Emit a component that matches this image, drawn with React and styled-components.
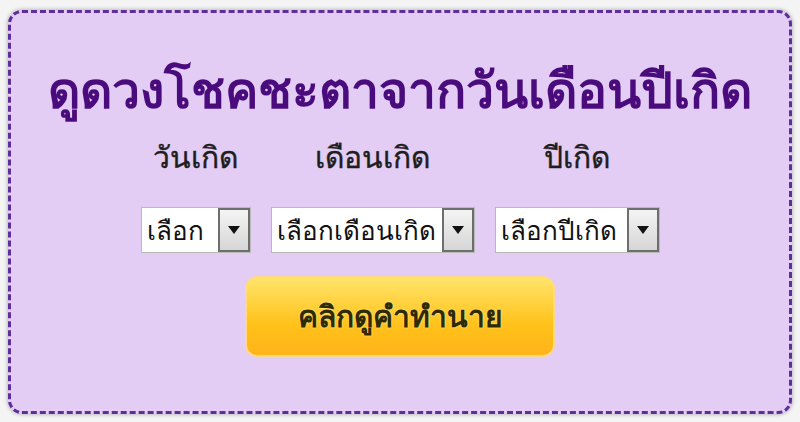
import styled, { createGlobalStyle } from "styled-components";

const GlobalStyle = createGlobalStyle`
  html, body {
    margin: 0;
    padding: 0;
    background: #f4f4f4;
  }
  body {
    font-family: Tahoma, "Noto Sans", "DejaVu Sans", sans-serif;
  }
`;

const fields = [
  { label: "วันเกิด", value: "เลือก", width: 110 },
  { label: "เดือนเกิด", value: "เลือกเดือนเกิด", width: 204 },
  { label: "ปีเกิด", value: "เลือกปีเกิด", width: 165 },
];

const App = () => {
  return (
    <>
      <GlobalStyle />
      <Page>
        <Panel>
          <Title>ดูดวงโชคชะตาจากวันเดือนปีเกิด</Title>
          <FieldRow>
            {fields.map((f) => (
              <Field key={f.label}>
                <Label>{f.label}</Label>
                <SelectBox $width={f.width}>
                  <SelectText>{f.value}</SelectText>
                  <ArrowBox>
                    <svg width="12" height="8" viewBox="0 0 12 8">
                      <path d="M0 0 L12 0 L6 8 Z" fill="#111" />
                    </svg>
                  </ArrowBox>
                </SelectBox>
              </Field>
            ))}
          </FieldRow>
          <SubmitButton>คลิกดูคำทำนาย</SubmitButton>
        </Panel>
      </Page>
    </>
  );
};

const Page = styled.div`
  width: 800px;
  height: 422px;
  padding: 10px 8px 8px;
  box-sizing: border-box;
`;

const Panel = styled.div`
  height: 100%;
  box-sizing: border-box;
  background: #e3cdf5;
  border: 3px dashed #5e2f9a;
  border-radius: 14px;
  box-shadow: 0 0 4px rgba(0, 0, 0, 0.35);
  display: flex;
  flex-direction: column;
  align-items: center;
  padding-top: 44px;
`;

const Title = styled.h1`
  margin: 0;
  font-size: 50px;
  line-height: 64px;
  font-weight: bold;
  color: #4a0c7c;
`;

const FieldRow = styled.div`
  display: flex;
  gap: 20px;
  margin-top: 16px;
`;

const Field = styled.div`
  display: flex;
  flex-direction: column;
  align-items: center;
`;

const Label = styled.div`
  font-size: 30px;
  line-height: 40px;
  color: #1e1e1e;
  margin-bottom: 30px;
  -webkit-text-stroke: 0.4px #1e1e1e;
`;

const SelectBox = styled.div`
  display: flex;
  align-items: stretch;
  justify-content: space-between;
  width: ${(p) => p.$width}px;
  height: 46px;
  box-sizing: border-box;
  background: #fff;
  border: 1px solid #b9b9b9;
`;

const SelectText = styled.span`
  display: flex;
  align-items: center;
  padding: 0 4px 0 5px;
  font-size: 26px;
  color: #111;
  white-space: nowrap;
`;

const ArrowBox = styled.span`
  flex: none;
  width: 32px;
  display: flex;
  align-items: center;
  justify-content: center;
  box-sizing: border-box;
  border: 2px solid #6e6e6e;
  background: linear-gradient(#f4f4f4, #d6d6d6);
`;

const SubmitButton = styled.button`
  margin-top: 23px;
  width: 310px;
  height: 81px;
  border: 2px solid #ffd98a;
  border-radius: 12px;
  background: linear-gradient(#ffe46a, #ffc21a 60%, #ffb319);
  font-family: inherit;
  font-size: 30px;
  font-weight: bold;
  color: #2f2a00;
  text-shadow: 0 0 2px #fff5b0;
  cursor: pointer;
`;

export default App;
